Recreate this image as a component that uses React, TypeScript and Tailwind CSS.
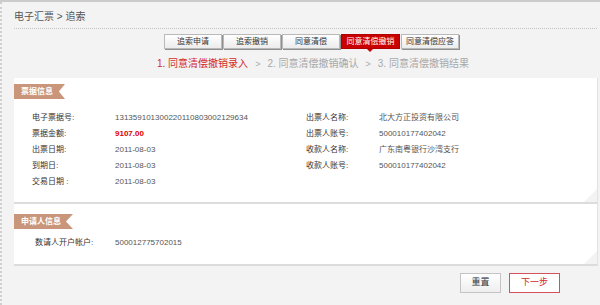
import React from "react";

const tabs = ["追索申请", "追索撤销", "同意清偿", "同意清偿撤销", "同意清偿应答"];

const billLeft = [
  { label: "电子票据号:", value: "1313591013002201108030021296 34".replace(" ", "") },
  { label: "票据金额:", value: "9107.00", red: true },
  { label: "出票日期:", value: "2011-08-03" },
  { label: "到期日:", value: "2011-08-03" },
  { label: "交易日期 :", value: "2011-08-03" },
];

const billRight = [
  { label: "出票人名称:", value: "北大方正投资有限公司" },
  { label: "出票人账号:", value: "500010177402042" },
  { label: "收款人名称:", value: "广东南粤银行沙湾支行" },
  { label: "收款人账号:", value: "500010177402042" },
];

const Ribbon = ({ text, width }: { text: string; width: string }) => (
  <div
    className={`${width} h-[15px] bg-[#c9957b] text-white font-bold text-[8px] leading-[15px] pl-[7px] [clip-path:polygon(0_0,100%_0,88%_50%,100%_100%,0_100%)]`}
  >
    {text}
  </div>
);

const Fold = () => (
  <svg className="absolute right-0 bottom-0" width="13" height="13" viewBox="0 0 13 13">
    <defs>
      <linearGradient id="fold" x1="0" y1="1" x2="1" y2="0">
        <stop offset="0" stopColor="#f3f3f3" />
        <stop offset="1" stopColor="#bdbdbd" />
      </linearGradient>
    </defs>
    <polygon points="13,0 13,13 0,13" fill="#f3f3f3" />
    <polygon points="13,0 0,13 3,10" fill="url(#fold)" />
  </svg>
);

export default function App() {
  return (
    <div className="w-[600px] h-[305px] bg-[#f3f3f3] border-t-2 border-[#cbcbcb] font-['Liberation_Sans','Noto_Sans_CJK_SC',sans-serif] overflow-hidden">
      <div className="h-full border-l-2 border-dotted border-[#cfcfcf] pl-[12px] pr-[3px]">
        <div className="h-[27px] pt-[9px] leading-[12px] text-[10px] text-[#555] border-b border-dotted border-[#c4c4c4]">
          电子汇票 &gt; 追索
        </div>

        <div className="mt-[5px] flex pl-[150px] gap-px">
          {tabs.map((t, i) => {
            const active = i === 3;
            return (
              <div key={t} className="relative">
                <div
                  className={
                    active
                      ? "w-[59px] h-[15px] bg-[#c80000] border border-[#b00000] text-white text-[8px] leading-[13px] text-center"
                      : "w-[58px] h-[15px] bg-linear-to-b from-white to-[#ececec] border border-[#b9b9b9] shadow-[1px_1px_0_#8f8f8f] text-[#333] text-[8px] leading-[13px] text-center"
                  }
                >
                  {t}
                </div>
                {active && (
                  <div className="absolute left-[26px] top-[15px] w-0 h-0 border-l-[3px] border-r-[3px] border-t-[3px] border-l-transparent border-r-transparent border-t-[#c80000]" />
                )}
              </div>
            );
          })}
        </div>

        <div className="mt-[8px] h-[14px] flex items-center pl-[143px] text-[10px] leading-[14px] text-[#a8a8a8]">
          <span className="text-[#d42a2a]">1. 同意清偿撤销录入</span>
          <span className="mx-[7px] text-[9px]">&gt;</span>
          <span>2. 同意清偿撤销确认</span>
          <span className="mx-[7px] text-[9px]">&gt;</span>
          <span>3. 同意清偿撤销结果</span>
        </div>

        <div className="relative mt-[7px] h-[126px] bg-white border-b-2 border-[#dcdcdc] shadow-[1px_0_0_#e2e2e2]">
          <div className="pt-[6px]">
            <Ribbon text="票据信息" width="w-[51px]" />
          </div>
          <div className="mt-[11px] flex text-[8px] leading-[16px]">
            <div className="w-[292px] pl-[18px]">
              {billLeft.map((r) => (
                <div key={r.label} className="flex h-[16px]">
                  <span className="w-[83px] text-[#333]">{r.label}</span>
                  <span className={r.red ? "text-[#e00000] font-bold" : "text-[#555]"}>{r.value}</span>
                </div>
              ))}
            </div>
            <div>
              {billRight.map((r) => (
                <div key={r.label} className="flex h-[16px]">
                  <span className="w-[73px] text-[#333]">{r.label}</span>
                  <span className="text-[#555]">{r.value}</span>
                </div>
              ))}
            </div>
          </div>
          <Fold />
        </div>

        <div className="relative h-[62px] bg-white border-b-2 border-[#dcdcdc] shadow-[1px_0_0_#e2e2e2]">
          <div className="pt-[10px]">
            <Ribbon text="申请人信息" width="w-[59px]" />
          </div>
          <div className="mt-[6px] flex h-[16px] pl-[21px] text-[8px] leading-[16px]">
            <span className="w-[80px] text-[#333]">数请人开户帐户:</span>
            <span className="text-[#555]">500012775702015</span>
          </div>
          <Fold />
        </div>

        <div className="mt-[7px] flex justify-end gap-[8px] pr-[37px]">
          <button className="w-[41px] h-[20px] bg-linear-to-b from-white to-[#eeeeee] border border-[#c4c4c4] text-[9px] text-[#333]">
            重置
          </button>
          <button className="w-[51px] h-[20px] bg-white border border-[#d4505c] text-[9px] text-[#d42a2a]">
            下一步
          </button>
        </div>
      </div>
    </div>
  );
}
